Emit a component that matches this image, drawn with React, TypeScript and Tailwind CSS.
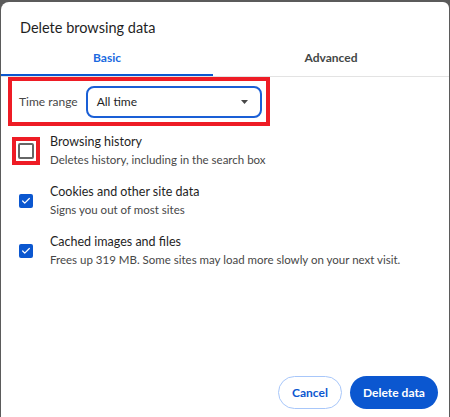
import { Check } from 'lucide-react';

const font = { fontFamily: 'Lato, "Noto Sans", sans-serif' };

export default function App() {
  return (
    <div className="w-[450px] h-[417px] bg-[#5b5b5b] pt-[2px] pl-[1px] overflow-hidden" style={font}>
      <div className="w-[448px] h-[415px] bg-white rounded-tl-[8px] rounded-tr-[6px] flex flex-col">
        <div className="pl-[19px] pt-[16px] h-[40px] text-[14.5px] text-[#1f1f1f] leading-[20px]">Delete browsing data</div>

        <div className="flex h-[35px] border-b border-[#e3e3e3]">
          <div className="w-[212px] flex flex-col">
            <div className="flex-1 flex items-center justify-center text-[12px] font-bold text-[#1a6ae0]">Basic</div>
            <div className="h-[2px] bg-[#0b57d0]" />
          </div>
          <div className="flex-1 flex items-center justify-center text-[12px] font-bold text-[#444746] pb-[2px]">Advanced</div>
        </div>

        <div className="pl-[7px]">
          <div className="w-[262px] h-[49px] border-[4px] border-[#ee1c25] flex items-center pl-[7px] gap-[8px]">
            <span className="text-[12px] text-[#474747] whitespace-nowrap">Time range</span>
            <div className="w-[176px] h-[32px] border-2 border-[#1a5fd6] rounded-[8px] flex items-center justify-between pl-[9px] pr-[12px]">
              <span className="text-[12px] text-[#1f1f1f]">All time</span>
              <svg width="7" height="4" viewBox="0 0 7 4"><path d="M0 0h7L3.5 4z" fill="#474747" /></svg>
            </div>
          </div>
        </div>

        <div className="flex flex-col pl-[11px] pt-[7px] gap-[14px]">
          <Row
            label="Browsing history"
            desc="Deletes history, including in the search box"
            box={
              <div className="w-[28px] h-[28px] border-[4px] border-[#ee1c25] flex items-center justify-center">
                <div className="w-[16px] h-[16px] border-2 border-[#666] rounded-[2px]" />
              </div>
            }
          />
          <Row label="Cookies and other site data" desc="Signs you out of most sites" box={<Checked />} />
          <Row label="Cached images and files" desc="Frees up 319 MB. Some sites may load more slowly on your next visit." box={<Checked />} />
        </div>

        <div className="mt-auto flex justify-end gap-[8px] pr-[11px] pb-[8px]">
          <button className="h-[33px] w-[64px] rounded-full border border-[#a8c7fa] text-[12px] font-bold text-[#0b57d0]">Cancel</button>
          <button className="h-[33px] w-[88px] rounded-full bg-[#0b57d0] text-[12px] font-bold text-white">Delete data</button>
        </div>
      </div>
    </div>
  );
}

function Checked() {
  return (
    <div className="w-[28px] h-[28px] flex items-center pl-[7px]">
      <div className="w-[14px] h-[14px] rounded-[2px] bg-[#0b57d0] flex items-center justify-center">
        <Check size={10} strokeWidth={3} className="text-white" />
      </div>
    </div>
  );
}

function Row({ label, desc, box }: { label: string; desc: string; box: React.ReactNode }) {
  return (
    <div className="flex items-center">
      <div className="w-[28px] shrink-0">{box}</div>
      <div className="pl-[10px] flex flex-col">
        <span className="text-[12.5px] leading-[18px] text-[#1f1f1f]">{label}</span>
        <span className="text-[11.5px] leading-[18px] text-[#474747]">{desc}</span>
      </div>
    </div>
  );
}
